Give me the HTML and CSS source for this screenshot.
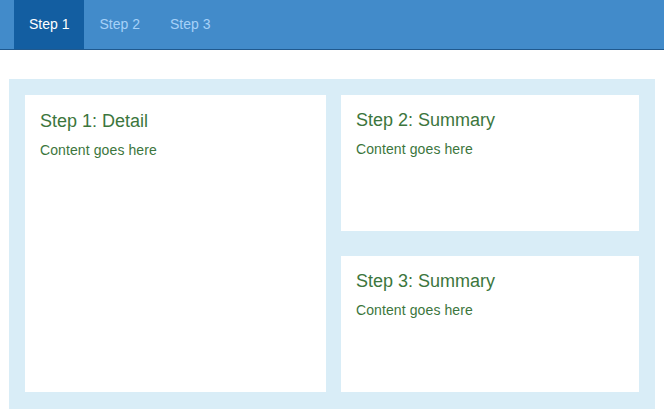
FILE: index.html
```html
<!DOCTYPE html>
<html lang="en">
<head>
<meta charset="utf-8">
<title>Steps</title>
<link rel="stylesheet" href="styles.css">
</head>
<body>
<nav class="navbar">
  <ul class="tabs">
    <li class="tab active">Step 1</li>
    <li class="tab">Step 2</li>
    <li class="tab">Step 3</li>
  </ul>
</nav>
<main class="board">
  <section class="card card-tall">
    <h3 class="card-title">Step 1: Detail</h3>
    <p class="card-text">Content goes here</p>
  </section>
  <div class="stack">
    <section class="card">
      <h3 class="card-title">Step 2: Summary</h3>
      <p class="card-text">Content goes here</p>
    </section>
    <section class="card">
      <h3 class="card-title">Step 3: Summary</h3>
      <p class="card-text">Content goes here</p>
    </section>
  </div>
</main>
</body>
</html>
```

FILE: styles.css
```css
* { box-sizing: border-box; }
html, body { margin: 0; padding: 0; background: #ffffff; }
body {
  font-family: "Liberation Sans", Arial, sans-serif;
  font-size: 14px;
  line-height: 20px;
  width: 664px;
  height: 419px;
  overflow: hidden;
}
.navbar {
  height: 50px;
  background: #428bca;
  border-bottom: 1px solid #20598e;
  padding-left: 14px;
}
.tabs {
  list-style: none;
  margin: 0;
  padding: 0;
  display: flex;
  height: 49px;
}
.tab {
  padding: 14px 15px 15px;
  color: #a6d1f8;
  font-size: 14px;
  line-height: 20px;
}
.tab.active {
  background: #135ea1;
  color: #ffffff;
}
.board {
  margin: 29px 9px 0 9px;
  width: 646px;
  height: 330px;
  background: #d9edf7;
  padding: 16px;
  display: flex;
  gap: 15px;
}
.card {
  background: #ffffff;
  padding: 16px 15px;
  color: #3c763d;
}
.card-tall {
  width: 301px;
  height: 297px;
  padding-top: 17px;
}
.stack {
  width: 298px;
  display: flex;
  flex-direction: column;
  gap: 25px;
}
.stack .card { height: 136px; }
.card-title {
  margin: 0 0 8px;
  font-size: 18px;
  line-height: 1.1;
  font-weight: normal;
  color: #3c763d;
}
.card-text {
  margin: 0;
  font-size: 14px;
  line-height: 20px;
  letter-spacing: 0.1px;
}
```
